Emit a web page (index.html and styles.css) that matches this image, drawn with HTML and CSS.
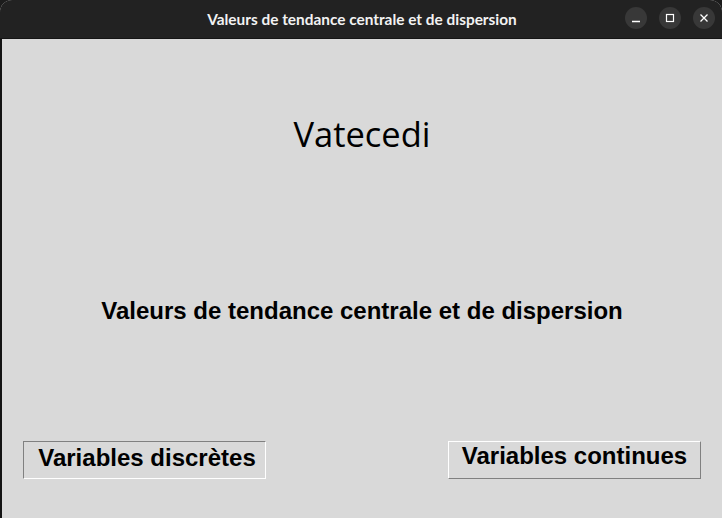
FILE: index.html
```html
<!DOCTYPE html>
<html lang="fr">
<head>
<meta charset="utf-8">
<title>Valeurs de tendance centrale et de dispersion</title>
<link rel="stylesheet" href="styles.css">
</head>
<body>
<div class="window">
  <header class="titlebar">
    <span class="title">Valeurs de tendance centrale et de dispersion</span>
    <div class="controls">
      <span class="ctl"><svg width="22" height="22" viewBox="0 0 22 22"><path d="M7 14.5h8" stroke="#fff" stroke-width="1.3"/></svg></span>
      <span class="ctl"><svg width="22" height="22" viewBox="0 0 22 22"><rect x="7.5" y="7.5" width="7" height="7" fill="none" stroke="#fff" stroke-width="1.2"/></svg></span>
      <span class="ctl"><svg width="22" height="22" viewBox="0 0 22 22"><path d="M7.5 7.5l7 7M14.5 7.5l-7 7" stroke="#fff" stroke-width="1.3"/></svg></span>
    </div>
  </header>
  <main class="content">
    <h1 class="app-name">Vatecedi</h1>
    <h2 class="subtitle">Valeurs de tendance centrale et de dispersion</h2>
    <div class="buttons">
      <button class="btn btn-sunken">Variables discrètes</button>
      <button class="btn btn-raised">Variables continues</button>
    </div>
  </main>
</div>
</body>
</html>
```
FILE: styles.css
```css
html, body {
  margin: 0;
  padding: 0;
  background: #1c1c1c;
  width: 722px;
  height: 518px;
  overflow: hidden;
}
.window {
  width: 722px;
  height: 518px;
  display: flex;
  flex-direction: column;
  border-radius: 12px 12px 0 0;
  overflow: hidden;
  background: #d9d9d9;
}
.titlebar {
  height: 38px;
  flex: none;
  background: #222222;
  border-bottom: 1px solid #151515;
  display: flex;
  align-items: center;
  justify-content: center;
  position: relative;
}
.title {
  font-family: "Lato", "Noto Sans", sans-serif;
  font-weight: 700;
  font-size: 15.4px;
  color: #f2f2f2;
  margin-left: 2px;
  margin-top: -1px;
}
.controls {
  position: absolute;
  right: 7px;
  top: 7px;
  display: flex;
  gap: 12px;
}
.ctl {
  width: 22px;
  height: 22px;
  border-radius: 50%;
  background: #383838;
  display: block;
}
.ctl svg { display: block; }
.content {
  flex: 1;
  border-left: 2px solid #141414;
  display: flex;
  flex-direction: column;
  align-items: center;
}
.app-name {
  margin: 73px 0 0 0;
  font-family: "Open Sans", "Noto Sans", sans-serif;
  font-weight: 400;
  font-size: 34.5px;
  line-height: 44px;
  color: #000;
}
.subtitle {
  margin: 141px 0 0 0;
  font-family: "Liberation Sans", Arial, sans-serif;
  font-weight: 700;
  font-size: 24px;
  line-height: 28px;
  color: #000;
}
.buttons {
  align-self: stretch;
  display: flex;
  justify-content: space-between;
  padding: 0 21px;
  margin-top: 116px;
}
.btn {
  font-family: "Liberation Sans", Arial, sans-serif;
  font-weight: 700;
  font-size: 24px;
  color: #000;
  background: #d9d9d9;
  margin: 0;
  box-sizing: border-box;
  height: 38px;
}
.btn-sunken {
  width: 243px;
  border: 1px solid;
  border-color: #808080 #ffffff #ffffff #808080;
  line-height: 31px;
  padding: 0 0 5px 5px;
}
.btn-raised {
  width: 253px;
  border: 1px solid;
  border-color: #ffffff #808080 #808080 #ffffff;
  line-height: 27px;
  padding: 0 0 9px 0;
}
```
